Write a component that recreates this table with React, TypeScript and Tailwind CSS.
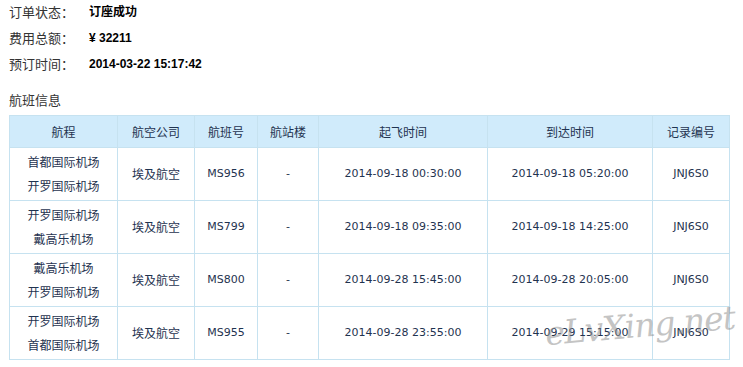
const flights = [
  { from: "首都国际机场", to: "开罗国际机场", no: "MS956", dep: "2014-09-18 00:30:00", arr: "2014-09-18 05:20:00" },
  { from: "开罗国际机场", to: "戴高乐机场", no: "MS799", dep: "2014-09-18 09:35:00", arr: "2014-09-18 14:25:00" },
  { from: "戴高乐机场", to: "开罗国际机场", no: "MS800", dep: "2014-09-28 15:45:00", arr: "2014-09-28 20:05:00" },
  { from: "开罗国际机场", to: "首都国际机场", no: "MS955", dep: "2014-09-28 23:55:00", arr: "2014-09-29 15:15:00" },
]

const cjk = "font-['Noto_Sans_CJK_SC',sans-serif] text-[12px]"
const latin = "font-['DejaVu_Sans','Noto_Sans_CJK_SC',sans-serif] text-[11px]"

const headers = ["航程", "航空公司", "航班号", "航站楼", "起飞时间", "到达时间", "记录编号"]
const widths = ["w-[108px]", "w-[77px]", "w-[63px]", "w-[61px]", "w-[169px]", "w-[165px]", "w-[77px]"]

function InfoRow({ label, children }: { label: string; children: React.ReactNode }) {
  return (
    <div className="flex h-[26px] items-center">
      <span className="w-[80px] font-['Noto_Sans_CJK_SC',sans-serif] text-[13px] text-[#333]">{label}</span>
      <span className="font-['Liberation_Sans','Noto_Sans_CJK_SC',sans-serif] text-[12px] font-bold text-black">
        {children}
      </span>
    </div>
  )
}

export default function App() {
  return (
    <div className="relative h-[367px] w-[743px] overflow-hidden bg-white pl-[9px]">
      <div className="-mt-px">
        <InfoRow label="订单状态：">订座成功</InfoRow>
        <InfoRow label="费用总额：">¥ 32211</InfoRow>
        <InfoRow label="预订时间：">2014-03-22 15:17:42</InfoRow>
      </div>

      <div className="mt-[11px] flex h-[24px] items-center font-['Noto_Sans_CJK_SC',sans-serif] text-[13px] text-[#333]">
        航班信息
      </div>

      <table className="mt-[3px] w-[720px] table-fixed border-collapse text-center text-[#1f3350]">
        <thead>
          <tr className="h-[32px] bg-[#d0ebfb]">
            {headers.map((h, i) => (
              <th key={h} className={`${widths[i]} border border-[#c6e2f0] p-0 font-normal ${cjk}`}>
                {h}
              </th>
            ))}
          </tr>
        </thead>
        <tbody>
          {flights.map((f) => (
            <tr key={f.no} className="h-[53px]">
              <td className={`border border-[#c6e2f0] p-0 leading-[24px] ${cjk}`}>
                <div>{f.from}</div>
                <div>{f.to}</div>
              </td>
              <td className={`border border-[#c6e2f0] p-0 ${cjk}`}>埃及航空</td>
              <td className={`border border-[#c6e2f0] p-0 ${latin}`}>{f.no}</td>
              <td className={`border border-[#c6e2f0] p-0 ${latin}`}>-</td>
              <td className={`border border-[#c6e2f0] p-0 ${latin}`}>{f.dep}</td>
              <td className={`border border-[#c6e2f0] p-0 ${latin}`}>{f.arr}</td>
              <td className={`border border-[#c6e2f0] p-0 ${latin}`}>JNJ6S0</td>
            </tr>
          ))}
        </tbody>
      </table>

      {/* watermark */}
      <div className="pointer-events-none absolute left-[545px] top-[309px] -rotate-[5deg] font-['DejaVu_Serif',serif] text-[33px] italic leading-none tracking-[-1px] text-[#8a8a8a] opacity-50">
        eLvXing.net
      </div>
    </div>
  )
}
